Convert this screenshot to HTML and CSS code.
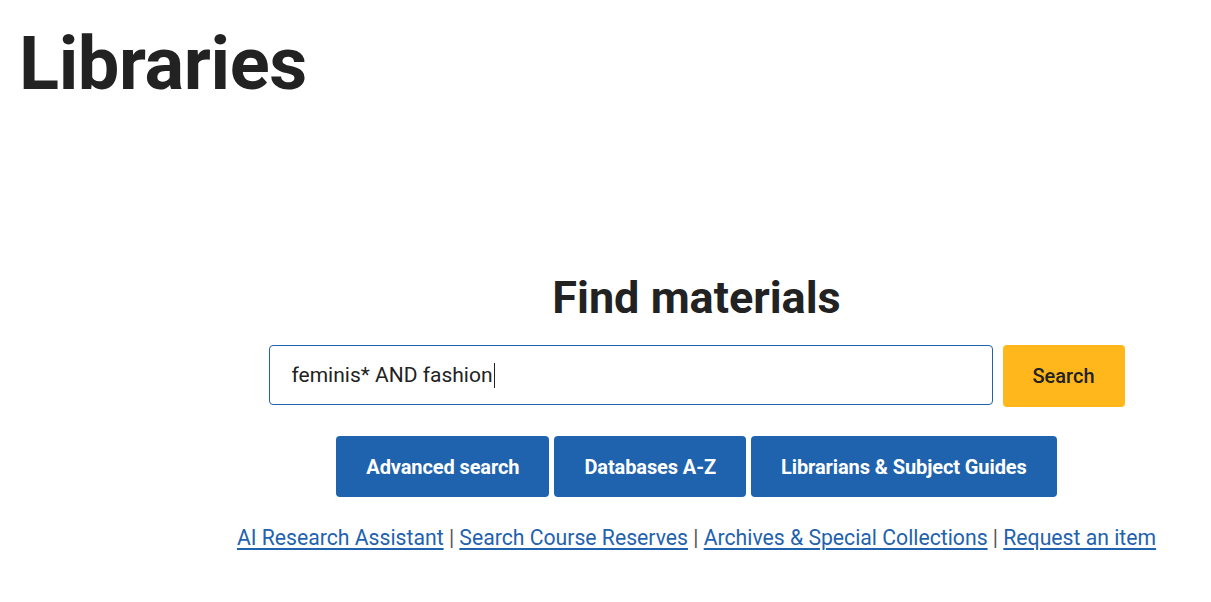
FILE: index.html
```html
<!DOCTYPE html>
<html lang="en">
<head>
<meta charset="utf-8">
<title>Libraries</title>
<link rel="stylesheet" href="styles.css">
</head>
<body>
<header class="site-header">
  <h1 class="site-title">Libraries</h1>
</header>
<main class="main">
  <section class="finder">
    <h2 class="finder-title">Find materials</h2>
    <form class="search-row">
      <div class="search-input">feminis* AND fashion<span class="caret"></span></div>
      <button type="button" class="search-btn">Search</button>
    </form>
    <div class="quick-links">
      <a class="quick-btn" href="#">Advanced search</a>
      <a class="quick-btn" href="#">Databases A-Z</a>
      <a class="quick-btn" href="#">Librarians &amp; Subject Guides</a>
    </div>
    <p class="text-links">
      <a href="#">AI Research Assistant</a> <span class="sep">|</span>
      <a href="#">Search Course Reserves</a> <span class="sep">|</span>
      <a href="#">Archives &amp; Special Collections</a> <span class="sep">|</span>
      <a href="#">Request an item</a>
    </p>
  </section>
</main>
</body>
</html>
```
FILE: styles.css
```css
* { box-sizing: border-box; }
html, body { margin: 0; padding: 0; background: #fff; }
body {
  font-family: Roboto, "Liberation Sans", Arial, sans-serif;
  color: #222;
  width: 1211px;
}
.site-header { padding: 19px 0 0 19px; }
.site-title {
  margin: 0;
  font-size: 74px;
  line-height: 90px;
  font-weight: 700;
  color: #222;
  letter-spacing: -0.4px;
}
.main {
  padding-left: 182px;
  padding-top: 161px;
}
.finder {
  display: flex;
  flex-direction: column;
  align-items: center;
}
.finder-title {
  margin: 0;
  font-size: 45px;
  line-height: 56px;
  font-weight: 700;
  color: #222;
}
.search-row {
  display: flex;
  gap: 10px;
  margin: 19px 0 0 0;
}
.search-input {
  width: 724px;
  height: 60px;
  border: 1px solid #1f62ae;
  border-radius: 4px;
  padding: 0 22px;
  display: flex;
  align-items: center;
  font-size: 21px;
  color: #222;
}
.caret {
  display: inline-block;
  width: 1px;
  height: 25px;
  background: #222;
  margin-left: 1px;
}
.search-btn {
  width: 122px;
  height: 62px;
  border: none;
  border-radius: 4px;
  background: #ffb71b;
  font-family: inherit;
  font-size: 20px;
  font-weight: 500;
  color: #222;
}
.quick-links {
  display: flex;
  gap: 5px;
  margin-top: 29px;
}
.quick-btn {
  display: flex;
  align-items: center;
  justify-content: center;
  height: 61px;
  padding: 0 30px;
  background: #1f62ae;
  color: #fff;
  border-radius: 4px;
  font-size: 20px;
  font-weight: 700;
  letter-spacing: -0.1px;
  text-decoration: none;
}
.text-links {
  margin: 27px 0 0 0;
  font-size: 21.2px;
  line-height: 28px;
  color: #444;
}
.text-links a {
  color: #1f62ae;
  text-decoration: underline;
  text-underline-offset: 3px;
}
.sep { color: #555; }
```
